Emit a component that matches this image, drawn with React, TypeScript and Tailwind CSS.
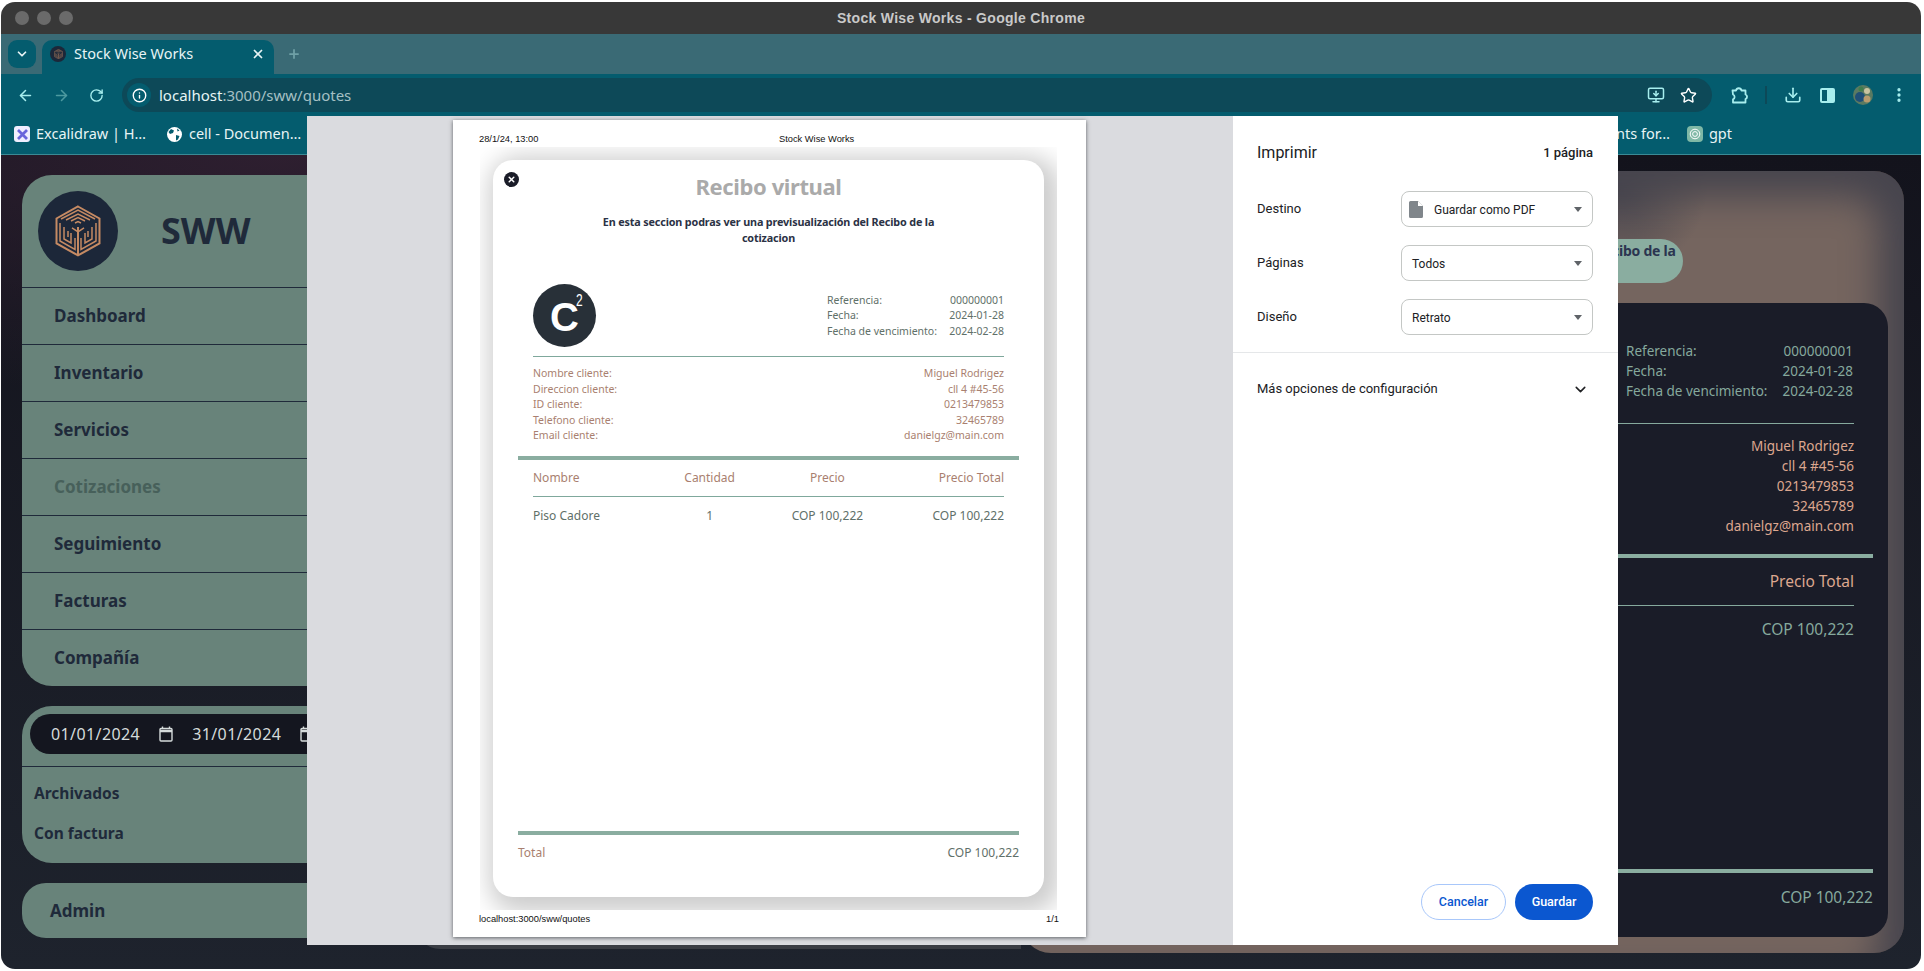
import { ArrowLeft, ArrowRight, RotateCw, Info, Star, Download, MoreVertical, ChevronDown, X, Plus, MonitorDown } from 'lucide-react';

const UI_FONT = 'font-["Noto_Sans",sans-serif]';
const navItems = ['Dashboard', 'Inventario', 'Servicios', 'Cotizaciones', 'Seguimiento', 'Facturas', 'Compañía'];
const refRows = [['Referencia:', '000000001'], ['Fecha:', '2024-01-28'], ['Fecha de vencimiento:', '2024-02-28']];
const clientRows = [
  ['Nombre cliente:', 'Miguel Rodrigez'],
  ['Direccion cliente:', 'cll 4 #45-56'],
  ['ID cliente:', '0213479853'],
  ['Telefono cliente:', '32465789'],
  ['Email cliente:', 'danielgz@main.com'],
];

function CubeLogo({ size = 46 }: { size?: number }) {
  return (
    <svg width={size} height={size * 1.13} viewBox="0 0 46 52" fill="none" stroke="#c58a63" strokeWidth="1.5">
      <path d="M23 1.5 44.5 13.5v25L23 50.5 1.5 38.5v-25z" strokeWidth="2" />
      <path d="M6 14 23 5l17 9" />
      <path d="M11 15 23 9l12 6" />
      <path d="M16 16l7-3.5 7 3.5" />
      <path d="M20 18l3-1.5 3 1.5" />
      <path d="M5 18v18l15 8.5V33" />
      <path d="M9 22v12l7 4V28" />
      <path d="M13 26v6" />
      <path d="M41 18v18l-15 8.5V33" />
      <path d="M37 22v12l-7 4V28" />
      <path d="M33 26v6" />
      <path d="M23 22v28" strokeWidth="2" />
      <path d="M23 27l-6-4M23 27l6-4" />
    </svg>
  );
}

function CalendarIcon() {
  return (
    <svg width="14" height="16" viewBox="0 0 14 16" fill="none" stroke="#d5dbdb" strokeWidth="1.4">
      <rect x="1" y="2.5" width="12" height="12.5" rx="1" />
      <path d="M1 5h12" strokeWidth="2.6" />
      <path d="M3.5 0.5v2M10.5 0.5v2" />
    </svg>
  );
}

function Caret() {
  return <span className="w-0 h-0 border-x-[4px] border-x-transparent border-t-[5px] border-t-[#5f6368]" />;
}

function PrintSelect({ label, value, icon }: { label: string; value: string; icon?: boolean }) {
  return (
    <div className="flex items-center justify-between h-[36px]">
      <span className="text-[13px] text-[#202124]">{label}</span>
      <div className={`w-[192px] h-[36px] rounded-[8px] border border-[#c4c7c5] flex items-center pr-[10px] text-[12px] text-[#202124] ${icon ? 'pl-[7px]' : 'pl-[10px]'}`}>
        {icon && (
          <svg width="14" height="17" viewBox="0 0 14 17" className="mr-[11px]">
            <path d="M1.5 0H9l5 5v10.5a1.5 1.5 0 0 1-1.5 1.5h-11A1.5 1.5 0 0 1 0 15.5v-14A1.5 1.5 0 0 1 1.5 0z" fill="#80868b" />
            <path d="M9 0v5h5z" fill="#fff" />
          </svg>
        )}
        <span className="flex-1 mt-[1px]">{value}</span>
        <Caret />
      </div>
    </div>
  );
}

function C2Logo() {
  return (
    <div className="relative w-[63px] h-[63px] rounded-full bg-[#283038] flex items-center justify-center text-white font-['Liberation_Sans',sans-serif] font-bold">
      <span className="text-[40px] leading-none mt-[2px]">C</span>
      <span className="absolute left-[42px] top-[9px] text-[16px] font-normal leading-none scale-x-75">2</span>
    </div>
  );
}

function Receipt() {
  return (
    <div className={`relative ml-[13px] mt-[13px] w-[551px] h-[737px] rounded-[20px] bg-white shadow-[6px_6px_24px_10px_rgba(0,0,0,0.2)] flex flex-col ${UI_FONT}`}>
      <button className="absolute left-[11px] top-[12px] w-[15px] h-[15px] rounded-full bg-[#1a1c28] flex items-center justify-center">
        <X className="w-[9px] h-[9px] text-white" strokeWidth={4} />
      </button>
      <h1 className="mt-[10px] text-center text-[22px] leading-[32px] font-bold tracking-[-0.4px] text-[#aaaaaa]">Recibo virtual</h1>
      <p className="mt-[12px] text-center text-[10.8px] leading-[16px] font-bold tracking-[-0.15px] whitespace-nowrap text-[#2b3245]">
        En esta seccion podras ver una previsualización del Recibo de la
        <br />
        cotizacion
      </p>
      <div className="mt-[38px] mx-[40px] flex items-center justify-between">
        <C2Logo />
        <div className="pt-[1px] text-[10.5px] leading-[15.5px] text-[#5f7069]">
          {refRows.map(([k, v]) => (
            <div key={k} className="grid grid-cols-[116px_61px]">
              <span>{k}</span>
              <span className="text-right">{v}</span>
            </div>
          ))}
        </div>
      </div>
      <div className="mt-[9px] mx-[40px] border-t border-[#7fa89c]" />
      <div className="mt-[9px] mx-[40px] text-[10.5px] leading-[15.5px] text-[#a97f70]">
        {clientRows.map(([k, v]) => (
          <div key={k} className="flex justify-between">
            <span>{k}</span>
            <span>{v}</span>
          </div>
        ))}
      </div>
      <div className="mt-[12px] mx-[25px] h-[4px] bg-[#8aada0]" />
      <div className="mt-[10px] mx-[40px] grid grid-cols-4 text-[12px] leading-[16px] text-[#a97f70]">
        <span>Nombre</span>
        <span className="text-center">Cantidad</span>
        <span className="text-center">Precio</span>
        <span className="text-right">Precio Total</span>
      </div>
      <div className="mt-[10px] mx-[40px] border-t border-[#7fa89c]" />
      <div className="mt-[11px] mx-[40px] grid grid-cols-4 text-[12px] leading-[16px] text-[#5f7069]">
        <span>Piso Cadore</span>
        <span className="text-center">1</span>
        <span className="text-center">COP 100,222</span>
        <span className="text-right">COP 100,222</span>
      </div>
      <div className="mt-auto mx-[25px] h-[4px] bg-[#8aada0]" />
      <div className="mt-[10px] mb-[36px] mx-[25px] flex justify-between text-[12px] leading-[16px]">
        <span className="text-[#a97f70]">Total</span>
        <span className="text-[#5f7069]">COP 100,222</span>
      </div>
    </div>
  );
}

function PrintDialog() {
  return (
    <div className="absolute left-[307px] top-[116px] w-[1311px] h-[829px] flex font-['Roboto',sans-serif]">
      <div className="flex-1 bg-[#dadbdf]">
        <div className="ml-[146px] mt-[4px] w-[633px] h-[817px] bg-white shadow-[0_1px_4px_rgba(60,64,67,0.8)] flex flex-col font-['Liberation_Sans',sans-serif] text-[9.3px] text-[#111]">
          <div className="h-[27px] pl-[26px] pt-[13px] flex leading-[12px]">
            <span className="w-[300px]">28/1/24, 13:00</span>
            <span>Stock Wise Works</span>
          </div>
          <div className="ml-[27px] w-[577px] h-[763px] overflow-hidden bg-white">
            <Receipt />
          </div>
          <div className="pl-[26px] pr-[27px] pt-[3px] flex justify-between leading-[12px]">
            <span>localhost:3000/sww/quotes</span>
            <span>1/1</span>
          </div>
        </div>
      </div>
      <div className="w-[385px] bg-white flex flex-col">
        <div className="h-[73px] px-[24px] flex items-center justify-between">
          <span className="text-[16px] text-[#202124]">Imprimir</span>
          <span className="text-[13px] font-medium text-[#202124] mr-[1px]">1 página</span>
        </div>
        <div className="mt-[2px] pl-[24px] pr-[25px] flex flex-col gap-[18px]">
          <PrintSelect label="Destino" value="Guardar como PDF" icon />
          <PrintSelect label="Páginas" value="Todos" />
          <PrintSelect label="Diseño" value="Retrato" />
        </div>
        <div className="mt-[17px] border-t border-[#e5e7e9]" />
        <div className="h-[72px] pl-[24px] pr-[29px] flex items-center justify-between text-[13px] text-[#202124]">
          <span>Más opciones de configuración</span>
          <ChevronDown className="w-[17px] h-[17px]" strokeWidth={2.2} />
        </div>
        <div className="mt-auto mb-[25px] pr-[25px] flex justify-end gap-[9px] text-[12.5px] font-medium">
          <button className="w-[85px] h-[36px] rounded-full border border-[#a8c7fa] text-[#0b57d0]">Cancelar</button>
          <button className="w-[78px] h-[36px] rounded-full bg-[#0b57d0] text-white">Guardar</button>
        </div>
      </div>
    </div>
  );
}

function Sidebar() {
  return (
    <aside className="mt-[4px] w-[374px] shrink-0 flex flex-col gap-[20px] text-[#1f2a3a]">
      <nav className="rounded-[30px] bg-[#68837a] overflow-hidden">
        <div className="h-[113px] pl-[16px] flex items-center border-b border-[#1f2a3a]">
          <div className="w-[80px] h-[80px] rounded-full bg-[#1c2739] flex items-center justify-center">
            <CubeLogo />
          </div>
          <span className="ml-[43px] text-[36px] font-bold leading-none">SWW</span>
        </div>
        {navItems.map((item, i) => (
          <div
            key={item}
            className={`pl-[32px] flex items-center text-[17px] font-bold ${i < navItems.length - 1 ? 'h-[57px] border-b border-[#1f2a3a]' : 'h-[56px]'} ${item === 'Cotizaciones' ? 'text-[#47605a]' : ''}`}
          >
            {item}
          </div>
        ))}
      </nav>
      <div className="h-[157px] rounded-[30px] bg-[#68837a] pt-[8px] overflow-hidden">
        <div className="mx-[8px] h-[40px] rounded-full bg-[#14161f] pl-[21px] flex items-center text-[16px] text-[#d5dbdb] tracking-[0.4px]">
          <span>01/01/2024</span>
          <span className="ml-[19px]"><CalendarIcon /></span>
          <span className="ml-[19px]">31/01/2024</span>
          <span className="ml-[19px]"><CalendarIcon /></span>
        </div>
        <div className="mt-[12px] border-t border-[#1f2a3a]" />
        <div className="pl-[12px] text-[15.5px] font-bold leading-[20px]">
          <div className="mt-[16px]">Archivados</div>
          <div className="mt-[20px]">Con factura</div>
        </div>
      </div>
      <div className="h-[55px] rounded-[24px] bg-[#68837a] pl-[28px] flex items-center text-[17px] font-bold">Admin</div>
    </aside>
  );
}

function DarkReceipt() {
  return (
    <div className="flex-1 ml-[16px] rounded-[24px] bg-[#1a1c28] flex flex-col text-[13.5px] leading-[20px] text-[#86a99d]">
      <div className="mt-[38px] mr-[35px] self-end">
        {refRows.map(([k, v]) => (
          <div key={k} className="grid grid-cols-[150px_77px]">
            <span>{k}</span>
            <span className="text-right">{v}</span>
          </div>
        ))}
      </div>
      <div className="mt-[22px] ml-[50px] mr-[34px] border-t border-[#86a99d]" />
      <div className="mt-[12px] ml-[50px] mr-[34px] text-[#dda78f]">
        {clientRows.map(([k, v]) => (
          <div key={k} className="flex justify-between">
            <span>{k}</span>
            <span>{v}</span>
          </div>
        ))}
      </div>
      <div className="mt-[18px] mx-[15px] h-[4px] bg-[#8aada0]" />
      <div className="mt-[13px] ml-[50px] mr-[34px] grid grid-cols-4 text-[#dda78f] text-[15.5px]">
        <span>Nombre</span>
        <span className="text-center">Cantidad</span>
        <span className="text-center">Precio</span>
        <span className="text-right">Precio Total</span>
      </div>
      <div className="mt-[14px] ml-[50px] mr-[34px] border-t border-[#86a99d]" />
      <div className="mt-[13px] ml-[50px] mr-[34px] grid grid-cols-4 text-[15.5px]">
        <span>Piso Cadore</span>
        <span className="text-center">1</span>
        <span className="text-center">COP 100,222</span>
        <span className="text-right">COP 100,222</span>
      </div>
      <div className="mt-auto mx-[15px] h-[4px] bg-[#8aada0]" />
      <div className="mt-[14px] mb-[30px] mx-[15px] flex justify-between text-[15.5px]">
        <span className="text-[#dda78f]">Total</span>
        <span>COP 100,222</span>
      </div>
    </div>
  );
}

function MainArea() {
  return (
    <div className="flex-1 flex">
      <div className="w-[605px] shrink-0 mb-[20px] ml-[20px] rounded-bl-[24px] bg-[#3a3d44]" />
      <div className="flex-1 mb-[16px] pr-[16px] pb-[16px] rounded-[30px] bg-[#75655f] bg-[radial-gradient(circle_90px_at_597px_15px,#47454e_0%,transparent_100%)] shadow-[inset_-25px_25px_35px_#47454e] flex flex-col">
        <div className="h-[132px] flex items-end justify-center pb-[20px] pl-[16px]">
          <div className="w-[440px] h-[44px] rounded-[22px] bg-[#8aada0] pt-[1px] text-center text-[14px] leading-[22px] font-bold tracking-[-0.25px] whitespace-nowrap text-[#2b3550]">
            En esta seccion podras ver una previsualización del Recibo de la
            <br />
            cotizacion
          </div>
        </div>
        <DarkReceipt />
      </div>
    </div>
  );
}

function BrowserChrome() {
  return (
    <>
      <div className="relative h-[32px] bg-[#383838] flex items-center justify-center font-['Liberation_Sans',sans-serif] text-[14px] font-bold tracking-[0.3px] text-[#c9c9c9]">
        <div className="absolute left-[14px] top-[9px] flex gap-[8px]">
          <span className="w-[14px] h-[14px] rounded-full bg-[#6a6a6a]" />
          <span className="w-[14px] h-[14px] rounded-full bg-[#6a6a6a]" />
          <span className="w-[14px] h-[14px] rounded-full bg-[#6a6a6a]" />
        </div>
        Stock Wise Works - Google Chrome
      </div>
      <div className="h-[40px] bg-[#3a6a75] pl-[7px] pt-[6px] flex text-[#e8f4f5]">
        <div className="w-[28px] h-[28px] rounded-[9px] bg-[#045c6e] flex items-center justify-center">
          <ChevronDown className="w-[14px] h-[14px]" strokeWidth={3} />
        </div>
        <div className="ml-[6px] w-[232px] h-[34px] rounded-t-[10px] bg-[#045c6e] pl-[8px] pr-[9px] pb-[6px] flex items-center text-[14.5px]">
          <span className="w-[16px] h-[16px] rounded-full bg-[#1c2739] flex items-center justify-center">
            <CubeLogo size={9} />
          </span>
          <span className="ml-[8px] flex-1">Stock Wise Works</span>
          <X className="w-[14px] h-[14px]" strokeWidth={3} />
        </div>
        <Plus className="ml-[13px] mt-[7px] w-[14px] h-[14px] text-[#6fa0a6]" strokeWidth={3} />
      </div>
      <div className="h-[42px] bg-[#045c6e] pl-[16px] pr-[13px] flex items-center text-[#a7eeee]">
        <ArrowLeft className="w-[17px] h-[17px]" strokeWidth={2.2} />
        <ArrowRight className="ml-[19px] w-[17px] h-[17px] text-[#4d9aa0]" strokeWidth={2.2} />
        <RotateCw className="ml-[19px] w-[15px] h-[15px]" strokeWidth={2.2} />
        <div className="ml-[18px] w-[1590px] h-[34px] rounded-full bg-[#0d4958] pl-[5px] pr-[15px] flex items-center">
          <span className="w-[24px] h-[24px] rounded-full bg-[#045c6e] flex items-center justify-center text-white">
            <Info className="w-[15px] h-[15px]" strokeWidth={2.2} />
          </span>
          <span className="ml-[8px] mt-[1px] text-[15px] text-[#e6f5f5] flex-1">
            localhost<span className="text-[#a5c0c4]">:3000/sww/quotes</span>
          </span>
          <MonitorDown className="w-[18px] h-[18px]" strokeWidth={2} />
          <Star className="ml-[15px] w-[17px] h-[17px] text-white" strokeWidth={2} />
        </div>
        <svg className="ml-[18px]" width="18" height="18" viewBox="0 0 18 18" fill="none" stroke="currentColor" strokeWidth="1.8" strokeLinejoin="round">
          <path d="M2.5 4.5h3.5a2.8 2.8 0 0 1 5.5 0h4v4a2.4 2.4 0 0 1 0 4.5v3.5h-12.5v-3.2a2.6 2.6 0 0 0 0-4.8z" />
        </svg>
        <span className="ml-[17px] w-[2px] h-[18px] bg-[#0d4958]" />
        <Download className="ml-[17px] w-[18px] h-[18px]" strokeWidth={2.2} />
        <span className="ml-[18px] w-[15px] h-[15px] rounded-[2px] border-2 border-[#a7eeee] flex justify-end">
          <span className="w-[6px] h-full bg-[#a7eeee]" />
        </span>
        <svg className="ml-[18px]" width="20" height="20" viewBox="0 0 20 20">
          <circle cx="10" cy="10" r="10" fill="#5a7a62" />
          <circle cx="7" cy="12" r="5" fill="#1f4f78" />
          <circle cx="14" cy="6" r="3" fill="#c9c3a0" />
          <circle cx="14" cy="14" r="3.5" fill="#b79b6e" />
          <circle cx="8" cy="4" r="2.5" fill="#3f7d4d" />
        </svg>
        <MoreVertical className="ml-[17px] w-[18px] h-[18px]" strokeWidth={2.4} />
      </div>
      <div className="h-[39px] bg-[#045c6e] border-b border-[#3a8a95] flex items-center pb-[2px] pl-[13px] pr-[189px] text-[14.5px] text-[#e8f4f5]">
        <span className="w-[16px] h-[16px] rounded-[3px] bg-[#efeeff] flex items-center justify-center">
          <svg width="13" height="13" viewBox="0 0 13 13" fill="none" stroke="#6965db" strokeWidth="2.8">
            <path d="M2 2l9 9M11 2 2 11" />
          </svg>
        </span>
        <span className="ml-[6px]">Excalidraw | H…</span>
        <svg className="ml-[21px]" width="15" height="15" viewBox="0 0 15 15">
          <circle cx="7.5" cy="7.5" r="7.5" fill="#fff" />
          <path d="M4 2l3 1.5-1 2.5-3 1-1.5-2zM9 8l3.5 1-1.5 3.5-2 1zM10 1.5l2.5 2-2 1z" fill="#045c6e" />
        </svg>
        <span className="ml-[7px]">cell - Documen…</span>
        <span className="ml-auto">Components for…</span>
        <span className="ml-[17px] w-[16px] h-[16px] rounded-[4px] bg-[#7fb8a6] flex items-center justify-center">
          <svg width="12" height="12" viewBox="0 0 12 12" fill="none" stroke="#fff" strokeWidth="1">
            <circle cx="6" cy="6" r="4.8" />
            <circle cx="6" cy="6" r="2.4" />
          </svg>
        </span>
        <span className="ml-[6px]">gpt</span>
      </div>
    </>
  );
}

export default function App() {
  return (
    <div className="relative w-[1924px] h-[971px] bg-white overflow-hidden">
      <div className={`ml-[1px] pt-[2px] w-[1920px] h-[969px] ${UI_FONT}`}>
        <div className="h-full rounded-[14px] overflow-hidden flex flex-col">
          <BrowserChrome />
          <div className="flex-1 flex pl-[21px] pr-[17px] pt-[16px] bg-[radial-gradient(ellipse_45%_30%_at_15%_0%,#2e1f30_0%,transparent_100%),linear-gradient(180deg,#13131c,#1e232d)]">
            <Sidebar />
            <MainArea />
          </div>
        </div>
      </div>
      <PrintDialog />
    </div>
  );
}
